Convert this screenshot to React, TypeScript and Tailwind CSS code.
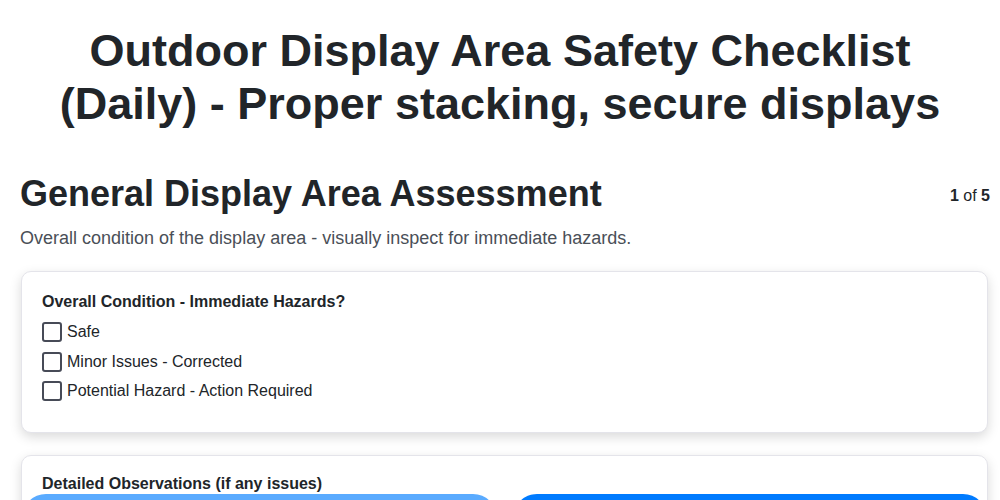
import React from "react";

const options = ["Safe", "Minor Issues - Corrected", "Potential Hazard - Action Required"];

export default function App() {
  return (
    <div className="min-h-screen bg-white text-[#212529]" style={{ fontFamily: '"Liberation Sans", Arial, sans-serif' }}>
      <div className="pl-5 pr-3 pt-6">
        <h1 className="text-center text-[45px] leading-[53px] font-bold mx-auto max-w-[960px] pr-2">
          Outdoor Display Area Safety Checklist (Daily) - Proper stacking, secure displays
        </h1>
        <div className="mt-[42px] flex items-start justify-between">
          <h2 className="text-[36px] leading-[44px] font-bold">General Display Area Assessment</h2>
          <div className="text-[16px] pt-[12px] -mr-[2px]">
            <span className="font-bold">1</span> of <span className="font-bold">5</span>
          </div>
        </div>
        <p className="mt-[9px] text-[18px] leading-[26px] text-[#4a4f57]">
          Overall condition of the display area - visually inspect for immediate hazards.
        </p>
        <div className="mt-[20px] ml-[1px] rounded-[10px] border border-[#e4e4ea] bg-white px-5 pt-[20px] pb-[31px] shadow-[0_4px_12px_rgba(0,0,0,0.15)]">
          <div className="text-[16px] font-bold leading-[20px]">Overall Condition - Immediate Hazards?</div>
          <div className="mt-[10px] flex flex-col gap-[9.5px]">
            {options.map((o) => (
              <label key={o} className="flex items-center gap-[5px] text-[16px] leading-[20px]">
                <span className="w-[20px] h-[20px] rounded-[3px] border-2 border-[#474b57] bg-white" />
                {o}
              </label>
            ))}
          </div>
        </div>
        <div className="mt-[22px] ml-[1px] rounded-[10px] border border-[#e4e4ea] bg-white px-5 pt-[18px] pb-[60px] shadow-[0_4px_12px_rgba(0,0,0,0.15)]">
          <div className="text-[16px] font-bold leading-[20px]">Detailed Observations (if any issues)</div>
        </div>
      </div>
      <div className="fixed left-[22px] right-[13px] top-[494px] flex gap-4">
        <button aria-label="Previous" className="flex-1 h-[48px] rounded-3xl bg-[#5aabff]" />
        <button aria-label="Next" className="flex-1 h-[48px] rounded-3xl bg-[#007bff]" />
      </div>
    </div>
  );
}
